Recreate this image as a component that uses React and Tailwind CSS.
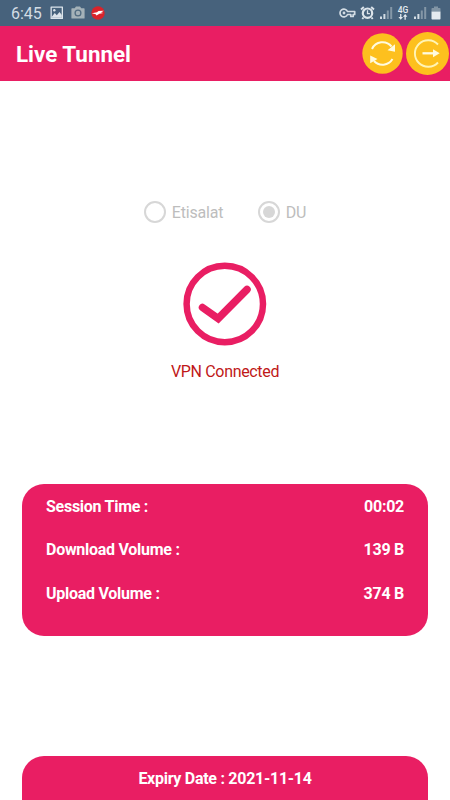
import { useState } from 'react';

const stats = [
  { label: 'Session Time :', value: '00:02' },
  { label: 'Download Volume :', value: '139 B' },
  { label: 'Upload Volume :', value: '374 B' },
];

const providers = ['Etisalat', 'DU'];

function SignalIcon() {
  return (
    <svg className="ml-[5px]" width="13" height="14" viewBox="0 0 13 14">
      <path d="M0 10.500h2V13H0zM3.400 8h2v5h-2z" fill="#d3dce4" />
      <path d="M6.800 4.500h2V13h-2zM10.200 1h2v12h-2z" fill="#8497a7" />
    </svg>
  );
}

function StatusBar() {
  return (
    <div className="flex h-[26px] items-center bg-[#47627c] pl-[11px] pr-[9px] text-[#d3dce4]">
      <span className="w-[39px] pt-[2px] text-[16px] leading-none">6:45</span>
      <svg width="14" height="14" viewBox="0 0 14 14">
        <path fillRule="evenodd" d="M1 .5h11.5q.5 0 .5.5v11.5q0 .5-.5.5H1q-.5 0-.5-.5V1Q.5.5 1 .5ZM1.800 1.800v9.900h9.900V1.800Z" fill="#dce4eb" />
        <path d="M1.800 10.800 4.800 7l2 2.200L9.500 6l2.300 3v2.800h-10Z" fill="#dce4eb" />
        <circle cx="4.300" cy="4.300" r="1.200" fill="#dce4eb" />
      </svg>
      <svg className="ml-[7px]" width="14" height="14" viewBox="0 0 14 14">
        <path d="M1 2.300h2.700L5 .5h4l1.300 1.800H13q.6 0 .6.600v9q0 .6-.6.600H1q-.6 0-.6-.6v-9q0-.6.6-.6Z" fill="#a4b1b8" />
        <circle cx="7" cy="7" r="2.900" fill="none" stroke="#516b80" strokeWidth="1.300" />
      </svg>
      <svg className="ml-[6px]" width="14" height="14" viewBox="0 0 14 14">
        <circle cx="7" cy="7" r="6.700" fill="#d9232b" />
        <path d="M.8 7.200 6 6.300 7.500 5l5.300-.2L10 6.600l2.400.5-4 .7L5.500 9.500l-.8-1.300Z" fill="#fff" />
      </svg>

      <div className="ml-auto flex items-center">
        <svg width="17" height="12" viewBox="0 0 17 12">
          <path
            d="M8.500 4.500H15.700v3h-1.500V9.500h-2.400v-2H8.500A3.900 3.900 0 1 1 8.500 4.500Z"
            fill="none"
            stroke="#d3dce4"
            strokeWidth="1.700"
            strokeLinejoin="round"
          />
          <circle cx="5" cy="6" r="1.400" fill="#d3dce4" />
        </svg>
        <svg className="ml-[4px]" width="15" height="14" viewBox="0 0 15 14">
          <circle cx="7.500" cy="7.200" r="4.700" fill="none" stroke="#dce4eb" strokeWidth="2.200" />
          <path d="M7.500 4.300v3.300h2.400" fill="none" stroke="#dce4eb" strokeWidth="1.300" />
          <path d="M1 3.500 3.800 1M14 3.500 11.200 1M3.500 11.500 2.300 13M11.500 11.500l1.200 1.500" stroke="#dce4eb" strokeWidth="1.900" />
        </svg>
        <SignalIcon />
        <div className="ml-[4px] flex w-[12px] flex-col items-center">
          <span className="text-[8.5px] font-medium leading-[8px] text-[#e5ebf0]">4G</span>
          <svg width="10" height="6" viewBox="0 0 10 6">
            <path d="M2.100 0h1.300v3H5L2.700 5.800.4 3h1.700zM6.500 5.800h1.300v-3h1.600L7.200 0 4.900 2.800h1.600z" fill="#e5ebf0" />
          </svg>
        </div>
        <SignalIcon />
        <svg className="ml-[4px]" width="10" height="14" viewBox="0 0 10 14">
          <path d="M3 .5h4V2h1.800q.7 0 .7.700V5.500h-9V2.700q0-.7.700-.7H3Z" fill="#8295a5" />
          <path d="M.5 5.500h9v7.300q0 .7-.7.700H1.200q-.7 0-.7-.7Z" fill="#e5ebf0" />
        </svg>
      </div>
    </div>
  );
}

function Header() {
  return (
    <header className="flex h-[55px] items-center bg-[#e91e63] pl-4 pr-[1px]">
      <h1 className="pt-[2px] text-[22.4px] font-bold leading-none text-white">Live Tunnel</h1>
      <button className="ml-auto" aria-label="Refresh">
        <svg width="41" height="41" viewBox="0 0 41 41">
          <circle cx="20.500" cy="20.500" r="20.200" fill="#fdc01e" />
          <g fill="none" stroke="#fffbe0" strokeWidth="2">
            <path d="M10 16A11.600 11.600 0 0 1 29.500 13.500" />
            <path d="M30.500 26A11.600 11.600 0 0 1 12 28" />
          </g>
          <path d="M33 11.300v7.400l-7.500-1.500ZM8.200 30.200v-7.700l7.300 3.600Z" fill="#fffbe0" />
        </svg>
      </button>
      <button className="ml-[3px]" aria-label="Log out">
        <svg width="43" height="43" viewBox="0 0 43 43">
          <circle cx="21.500" cy="21.500" r="21.500" fill="#fdc01e" />
          <path d="M32 12.500A13.300 13.300 0 1 0 32 30.500" fill="none" stroke="#fff4b5" strokeWidth="1.900" />
          <path d="M16.500 21.300h11.500" stroke="#fffbe0" strokeWidth="2.300" />
          <path d="m27 17.300 6.700 4-6.700 4Z" fill="#fffbe0" />
        </svg>
      </button>
    </header>
  );
}

export default function App() {
  const [provider] = useState('DU');

  return (
    <div className="flex h-screen w-full flex-col overflow-hidden bg-white font-['Roboto',sans-serif]">
      <StatusBar />
      <Header />

      <main className="flex flex-1 flex-col items-center">
        <div className="mt-[119px] flex h-[24px] items-center gap-[34.5px]">
          {providers.map((name) => (
            <div key={name} className="flex items-center gap-[6px] text-[16px] tracking-[-0.2px] text-[#bdbdbd]">
              <span className="flex size-[22px] items-center justify-center rounded-full border-2 border-[#d7d7d7]">
                {provider === name && <span className="size-[12px] rounded-full bg-[#d7d7d7]" />}
              </span>
              <span className="pt-px">{name}</span>
            </div>
          ))}
        </div>

        <svg className="mt-[38px]" width="84" height="84" viewBox="0 0 84 84">
          <circle cx="41.800" cy="42" r="38.200" fill="none" stroke="#e91e63" strokeWidth="6.500" />
          <path d="m19.500 45.500 15.700 11L64 27.500" fill="none" stroke="#e91e63" strokeWidth="7.500" strokeLinecap="round" />
        </svg>
        <p className="mt-[14px] text-[16px] leading-6 tracking-[-0.33px] text-[#c01818]">VPN Connected</p>

        <section className="mt-[100px] flex h-[152px] w-[406px] flex-col rounded-[22px] bg-[#e91e63] px-6 pt-[12.5px] text-[16px] font-bold leading-5 tracking-[-0.27px] text-white">
          {stats.map((row) => (
            <div key={row.label} className="mb-[23.5px] flex justify-between">
              <span>{row.label}</span>
              <span>{row.value}</span>
            </div>
          ))}
        </section>

        <footer className="mt-auto h-[44px] w-[406px] rounded-t-[22px] bg-[#e91e63] pt-[13px] text-center text-[16px] font-bold leading-5 tracking-[-0.28px] text-white">
          Expiry Date : 2021-11-14
        </footer>
      </main>
    </div>
  );
}
